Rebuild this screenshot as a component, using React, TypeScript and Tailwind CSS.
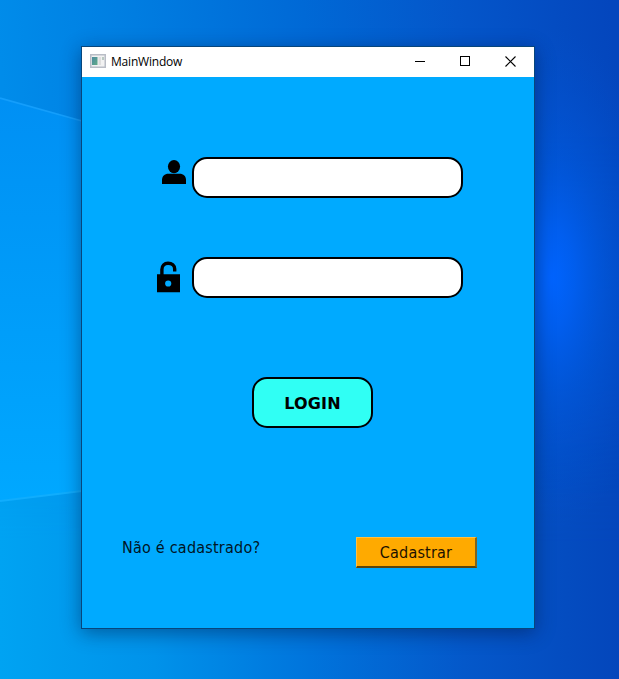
import React from "react";

function Wallpaper() {
  return (
    <svg className="absolute inset-0 h-full w-full" viewBox="0 0 619 679" preserveAspectRatio="none" aria-hidden="true">
      <defs>
        <linearGradient id="sky" gradientUnits="userSpaceOnUse" x1="0" y1="60" x2="610" y2="0">
          <stop offset="0" stopColor="#008cea" />
          <stop offset="0.2" stopColor="#007fe2" />
          <stop offset="0.5" stopColor="#0069d6" />
          <stop offset="0.75" stopColor="#0456ca" />
          <stop offset="1" stopColor="#0446bd" />
        </linearGradient>
        <linearGradient id="low" x1="0" y1="0" x2="1" y2="0">
          <stop offset="0" stopColor="#00a3f2" />
          <stop offset="0.25" stopColor="#0092ea" />
          <stop offset="0.5" stopColor="#0074dc" />
          <stop offset="0.75" stopColor="#0458ca" />
          <stop offset="1" stopColor="#0446bb" />
        </linearGradient>
        <linearGradient id="fade" x1="0" y1="0" x2="0" y2="1">
          <stop offset="0.2" stopColor="#fff" stopOpacity="0" />
          <stop offset="0.8" stopColor="#fff" />
        </linearGradient>
        <mask id="lowMask">
          <rect width="619" height="679" fill="url(#fade)" />
        </mask>
        <linearGradient id="beam" gradientUnits="userSpaceOnUse" x1="0" y1="100" x2="0" y2="500">
          <stop offset="0" stopColor="#0090f4" />
          <stop offset="0.5" stopColor="#009cf9" />
          <stop offset="1" stopColor="#00a8ff" />
        </linearGradient>
        <radialGradient id="glow" gradientUnits="userSpaceOnUse" cx="0" cy="0" r="1" gradientTransform="translate(552 278) scale(110 250)">
          <stop offset="0" stopColor="#0064ff" />
          <stop offset="0.2" stopColor="#0061f6" stopOpacity="0.85" />
          <stop offset="0.5" stopColor="#005ae2" stopOpacity="0.55" />
          <stop offset="1" stopColor="#0050d0" stopOpacity="0" />
        </radialGradient>
      </defs>
      <rect width="619" height="679" fill="url(#sky)" />
      <rect width="619" height="679" fill="url(#low)" mask="url(#lowMask)" />
      <path d="M0 98 L82 121 L300 180 V465 L82 491 L0 501 Z" fill="url(#beam)" />
      <path d="M0 98 L82 121" stroke="#149efb" strokeWidth="1.8" />
      <path d="M0 501 L82 491" stroke="#10adfd" strokeWidth="1.8" />
      <rect x="440" y="20" width="179" height="520" fill="url(#glow)" />
    </svg>
  );
}

function AppIcon() {
  return (
    <svg className="mb-0.5 ml-2 h-[14px] w-4 shrink-0" viewBox="0 0 16 14" aria-hidden="true">
      <defs>
        <linearGradient id="pane" x1="0" y1="0" x2="1" y2="1">
          <stop offset="0" stopColor="#4b8ba0" />
          <stop offset="1" stopColor="#62ab88" />
        </linearGradient>
      </defs>
      <rect x="0.75" y="0.75" width="14.5" height="12.5" fill="#f2f2f2" stroke="#b9bdc6" strokeWidth="1.5" />
      <rect x="2" y="3" width="5.5" height="8" fill="url(#pane)" />
      <rect x="8.5" y="3" width="2.5" height="8" fill="#dedede" />
      <rect x="12" y="3" width="2" height="3" fill="#b9c9c2" />
    </svg>
  );
}

function TitleBar() {
  return (
    <header className="flex h-[30px] items-center bg-white text-black">
      <AppIcon />
      <span className="ml-[5px] text-[12px] leading-4 tracking-[-0.2px] [font-family:'Open_Sans','Noto_Sans',sans-serif]">
        MainWindow
      </span>
      <div className="ml-auto flex h-full">
        <button aria-label="Minimizar" className="flex w-[45px] items-center justify-center">
          <svg width="11" height="11" viewBox="0 0 11 11" shapeRendering="crispEdges"><path d="M0 4.5H10" stroke="#000" /></svg>
        </button>
        <button aria-label="Maximizar" className="mb-px flex w-[45px] items-center justify-center">
          <svg width="11" height="11" viewBox="0 0 11 11" shapeRendering="crispEdges"><rect x="0.5" y="0.5" width="9" height="9" fill="none" stroke="#000" /></svg>
        </button>
        <button aria-label="Fechar" className="mb-px flex w-[46px] items-center justify-center pr-px">
          <svg width="11" height="11" viewBox="0 0 11 11"><path d="M0.5 0.5L10.5 10.5M10.5 0.5L0.5 10.5" stroke="#000" strokeWidth="1.1" /></svg>
        </button>
      </div>
    </header>
  );
}

function UserIcon() {
  return (
    <svg className="mt-[3px] h-6 w-6" viewBox="0 0 24 24" aria-hidden="true">
      <ellipse cx="12" cy="6.6" rx="6.1" ry="6.6" />
      <path d="M0 24V20C0 16 2.5 13.7 6.5 13.7H17.5C21.5 13.7 24 16 24 20V24Z" />
    </svg>
  );
}

function UnlockIcon() {
  return (
    <svg className="mt-[4px] h-[32px] w-[23px]" viewBox="0 0 23 32" aria-hidden="true">
      <path d="M4.9 14V8.5C4.9 4.5 7.5 2.2 11 2.2C15 2.2 17.7 4.6 17.7 8V10.5" fill="none" stroke="#000" strokeWidth="3.4" />
      <path fillRule="evenodd" d="M0 13.2H23V31.2H0ZM11.2 19.4A3.1 3.1 0 1 0 11.2 25.6A3.1 3.1 0 1 0 11.2 19.4Z" />
    </svg>
  );
}

const fieldClass = "h-[41px] w-[271px] rounded-[15px] border-2 border-black bg-white px-3 outline-none";

export default function App() {
  return (
    <main className="relative h-[679px] w-[619px] overflow-hidden bg-[#0069d6]">
      <Wallpaper />
      <div className="relative pl-[81px] pt-[46px]">
        <section className="h-[583px] w-[454px] border border-[#07467c] bg-[#00aaff] shadow-[0_4px_18px_rgba(0,20,60,0.45)]">
          <TitleBar />
          <form className="flex flex-col text-black [font-family:'DejaVu_Sans_Condensed','DejaVu_Sans',sans-serif]" onSubmit={(e) => e.preventDefault()}>
            <div className="mt-20 flex items-start pl-20">
              <UserIcon />
              <input aria-label="Usuário" className={`${fieldClass} ml-1.5`} />
            </div>
            <div className="mt-[59px] flex items-start pl-[75px]">
              <UnlockIcon />
              <input aria-label="Senha" type="password" className={`${fieldClass} ml-3`} />
            </div>
            <button className="ml-[170px] mt-[79px] h-[51px] w-[121px] rounded-[15px] border-2 border-black bg-[#30fff4] pt-0.5 text-[16px] font-bold leading-5 tracking-[0.2px] [font-family:'DejaVu_Sans',sans-serif]">
              LOGIN
            </button>
            <div className="mt-[109px] flex items-start pl-10">
              <span className="mt-[1px] w-[234px] text-[16px] leading-5 tracking-[0.22px] text-[#001525]">Não é cadastrado?</span>
              <button type="button" className="h-[31px] w-[121px] border border-b-2 border-r-2 border-b-[#5c450c] border-l-[#ffc044] border-r-[#7c6422] border-t-[#ffc044] bg-[#ffaa00] pt-0.5 text-[16px] leading-5 tracking-[0.2px] text-[#1c1200]">
                Cadastrar
              </button>
            </div>
          </form>
        </section>
      </div>
    </main>
  );
}
